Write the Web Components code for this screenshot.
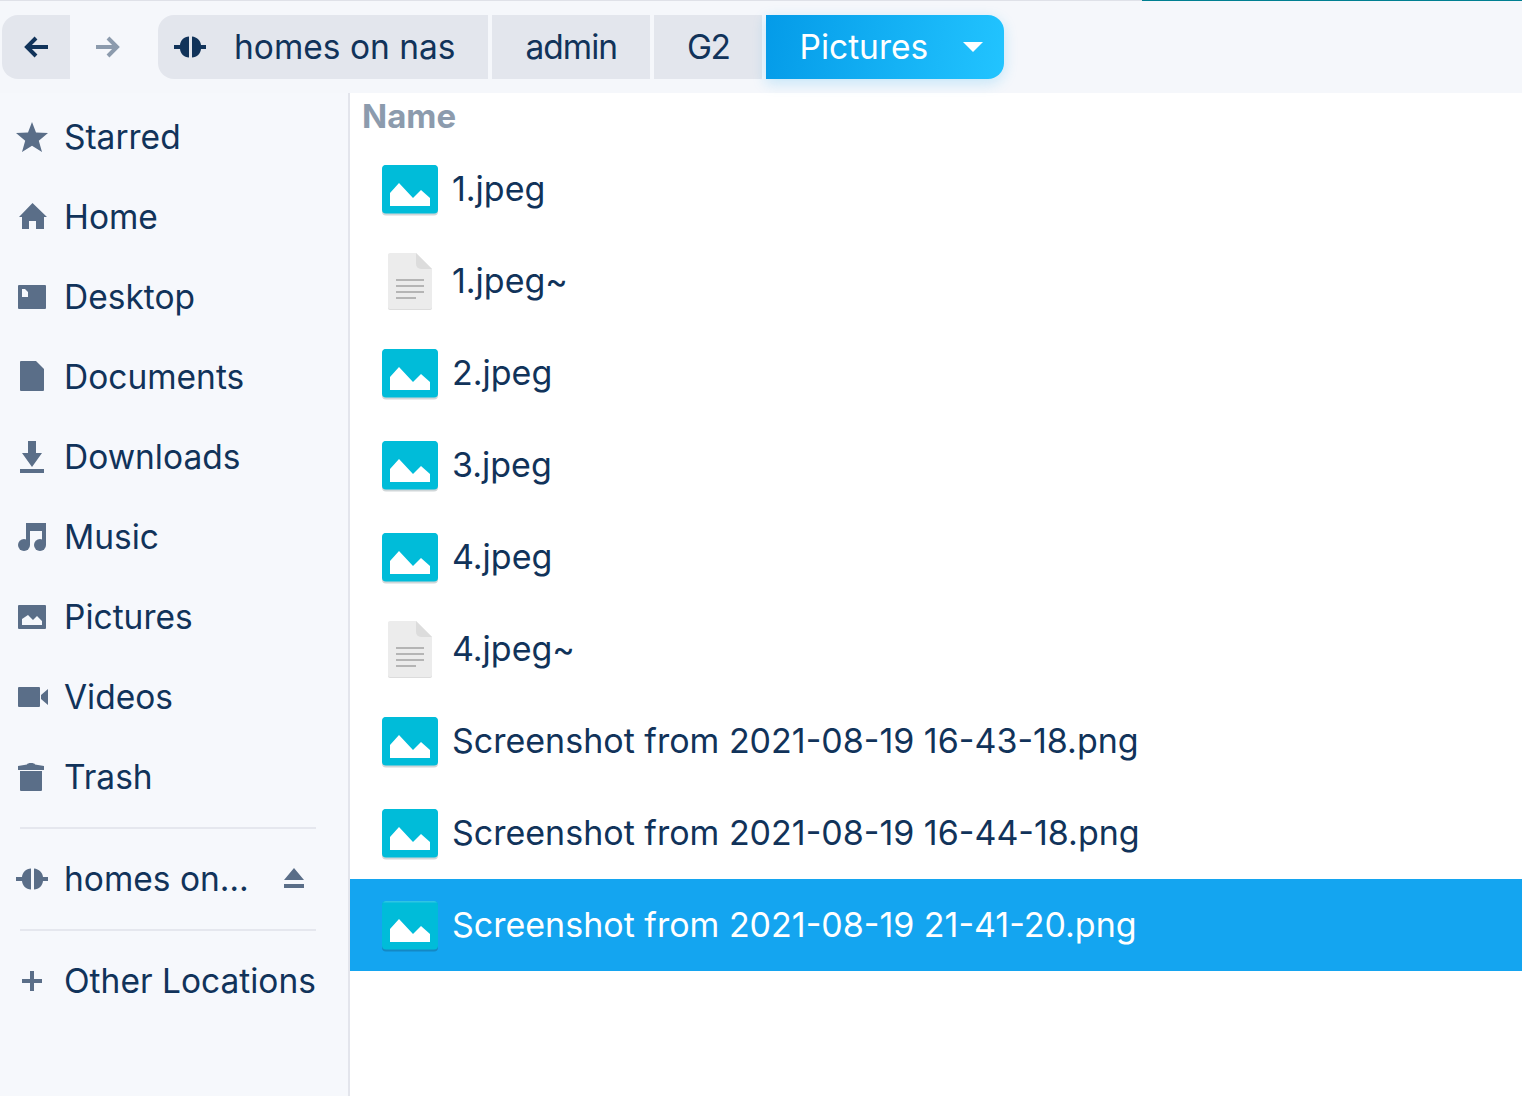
<!DOCTYPE html>
<html>
<head>
<meta charset="utf-8">
<title>Files</title>
<style>
    html, body { margin: 0; height: 100%; overflow: hidden; background: #fff; }
    body {
        font-family: "Inter", "Liberation Sans", sans-serif;
        font-size: 33.500px;
        font-weight: 380;
        color: #11335a;
    }
</style>
</head>
<body>
<fm-window>
    <fm-toolbar slot="toolbar">
        <fm-nav icon="back" class="active"></fm-nav>
        <fm-nav icon="forward"></fm-nav>
        <fm-crumb icon="network" first>homes on nas</fm-crumb>
        <fm-crumb style="letter-spacing: -1px">admin</fm-crumb>
        <fm-crumb style="letter-spacing: -1.500px">G2</fm-crumb>
        <fm-crumb current>Pictures</fm-crumb>
    </fm-toolbar>
    <fm-sidebar slot="sidebar">
        <fm-place icon="star">Starred</fm-place>
        <fm-place icon="home">Home</fm-place>
        <fm-place icon="desktop">Desktop</fm-place>
        <fm-place icon="document">Documents</fm-place>
        <fm-place icon="download">Downloads</fm-place>
        <fm-place icon="music">Music</fm-place>
        <fm-place icon="picture">Pictures</fm-place>
        <fm-place icon="video">Videos</fm-place>
        <fm-place icon="trash">Trash</fm-place>
        <fm-sep></fm-sep>
        <fm-place icon="network" eject>homes on…</fm-place>
        <fm-sep></fm-sep>
        <fm-place icon="plus">Other Locations</fm-place>
    </fm-sidebar>
    <fm-list slot="list">
        <fm-row type="image">1.jpeg</fm-row>
        <fm-row type="text">1.jpeg~</fm-row>
        <fm-row type="image">2.jpeg</fm-row>
        <fm-row type="image">3.jpeg</fm-row>
        <fm-row type="image">4.jpeg</fm-row>
        <fm-row type="text">4.jpeg~</fm-row>
        <fm-row type="image">Screenshot from 2021-08-19 16-43-18.png</fm-row>
        <fm-row type="image">Screenshot from 2021-08-19 16-44-18.png</fm-row>
        <fm-row type="image" selected>Screenshot from 2021-08-19 21-41-20.png</fm-row>
    </fm-list>
</fm-window>

<script>
// symbolic icons, 32x32 box, filled with currentColor
const ICONS = {
    back: '<path d="M24 12H3M12 3l-9 9 9 9" fill="none" stroke="currentColor" stroke-width="4"/>',
    forward: '<path d="M0 12h21M12 3l9 9-9 9" fill="none" stroke="currentColor" stroke-width="4"/>',
    star: '<path d="M16 1l4 10.500L32 12l-9.200 7.800L26 31l-10-6.300L6 31l3.200-11.200L0 12l12-.5z"/>',
    home: '<path d="M16.500 2L31 16h-3v12h-8v-8h-7v8H6V16H3z"/>',
    desktop: '<path fill-rule="evenodd" d="M3 4h26a1 1 0 0 1 1 1v22a1 1 0 0 1-1 1H3a1 1 0 0 1-1-1V5a1 1 0 0 1 1-1zm3 4v8h6v-5l-3-3z"/>',
    document: '<path d="M5 0h15l8 8v21a1 1 0 0 1-1 1H5a1 1 0 0 1-1-1V1a1 1 0 0 1 1-1z"/>',
    download: '<path d="M12 0h8v12h6l-10 14L6 12h6zM4 28h24v4H4z"/>',
    music: '<path d="M10 2h20v22h-4V10H14v14h-4V10z"/><circle cx="8" cy="24" r="6"/><circle cx="24" cy="24" r="6"/>',
    picture: '<path fill-rule="evenodd" d="M3 4h26a1 1 0 0 1 1 1v22a1 1 0 0 1-1 1H3a1 1 0 0 1-1-1V5a1 1 0 0 1 1-1zm3 14v6h20v-4l-5-5-4 4-5-5z"/>',
    video: '<path d="M3 6h20a1 1 0 0 1 1 1v18a1 1 0 0 1-1 1H3a1 1 0 0 1-1-1V7a1 1 0 0 1 1-1zM32 8v16l-7-6v-4z"/>',
    trash: '<path d="M11 3.500c0-1 2-1.500 4-1.500s4 .5 4 1.500L28 5v4H2V5zM4 10h22v19a1 1 0 0 1-1 1H5a1 1 0 0 1-1-1z"/>',
    network: '<path d="M15 5.500V26.500C10 26 6.500 23 6 18H0v-4h6c.5-5 4-8 9-8.500zM18 5.500c5 .5 8.500 4 9 8.500h5v4h-5c-.5 5-4 8-9 8.500z"/>',
    plus: '<path d="M14 6h4v8h8v4h-8v8h-4v-8H6v-4h8z"/>',
    eject: '<path d="M16 5l10 12H6zM6 21h20v4H6z"/>'
};

function svg(name, size = 32) {
    return `<svg width="${size}" height="${size}" viewBox="0 0 32 32" fill="currentColor">${ICONS[name]}</svg>`;
}

class FmWindow extends HTMLElement {
    constructor() {
        super();
        this.attachShadow({ mode: 'open' });
        this.shadowRoot.innerHTML = `
            <style>
                :host {
                    display: grid;
                    grid-template-columns: 350px 1fr;
                    grid-template-rows: 93px 1fr;
                    height: 1096px;
                }
                .top { grid-column: 1 / 3; }
            </style>
            <div class="top"><slot name="toolbar"></slot></div>
            <slot name="sidebar"></slot>
            <slot name="list"></slot>
        `;
    }
}

class FmToolbar extends HTMLElement {
    constructor() {
        super();
        this.attachShadow({ mode: 'open' });
        this.shadowRoot.innerHTML = `
            <style>
                :host {
                    display: flex;
                    position: relative;
                    box-sizing: border-box;
                    height: 93px;
                    padding: 15px 2px 14px;
                    background: #f5f7fb;
                    border-top: 1px solid #dfe1e8;
                }
                .progress {
                    position: absolute;
                    top: -1px;
                    left: 1142px;
                    right: 0;
                    height: 1px;
                    background: #007f91;
                }
            </style>
            <div class="progress"></div>
            <slot></slot>
        `;
    }
}

class FmNav extends HTMLElement {
    constructor() {
        super();
        this.attachShadow({ mode: 'open' });
        const name = this.getAttribute('icon');
        this.shadowRoot.innerHTML = `
            <style>
                :host {
                    display: flex;
                    align-items: center;
                    justify-content: center;
                    height: 64px;
                    margin-top: -1px;
                    width: 76px;
                    margin-right: 12px;
                    color: #8c9bad;
                }
                :host(.active) {
                    width: 68px;
                    margin-right: 0;
                    color: #11335a;
                    background: #e3e6ed;
                    border-radius: 16px 0 0 16px;
                }
                svg { display: block; }
            </style>
            <svg width="24" height="24" viewBox="0 0 24 24" fill="none">${ICONS[name]}</svg>
        `;
    }
}

class FmCrumb extends HTMLElement {
    constructor() {
        super();
        this.attachShadow({ mode: 'open' });
        const icon = this.getAttribute('icon');
        this.shadowRoot.innerHTML = `
            <style>
                :host {
                    display: flex;
                    align-items: center;
                    box-sizing: border-box;
                    height: 64px;
                    margin-top: -1px;
                    margin-right: 4px;
                    padding: 0 33px;
                    background: #e3e6ed;
                    color: #11335a;
                    white-space: nowrap;
                }
                :host([first]) {
                    padding-left: 16px;
                    border-radius: 16px 0 0 16px;
                }
                :host([current]) {
                    margin-right: 0;
                    padding-right: 21px;
                    color: #fff;
                    background: linear-gradient(100deg, #049be8, #22c4ff);
                    border-radius: 0 16px 16px 0;
                    box-shadow: 0 4px 14px rgba(20, 170, 240, 0.22);
                }
                svg { display: block; margin-right: 28px; }
                .arrow {
                    margin-left: 35px;
                    width: 0;
                    height: 0;
                    border: 10px solid transparent;
                    border-top: 10px solid #fff;
                    border-bottom: 0;
                }
            </style>
            ${icon ? svg(icon) : ''}
            <span class="label"><slot></slot></span>
            ${this.hasAttribute('current') ? '<div class="arrow"></div>' : ''}
        `;
    }
}

class FmSidebar extends HTMLElement {
    constructor() {
        super();
        this.attachShadow({ mode: 'open' });
        this.shadowRoot.innerHTML = `
            <style>
                :host {
                    display: block;
                    box-sizing: border-box;
                    padding-top: 4px;
                    background: #f6f8fc;
                    border-right: 2px solid #e3e5ec;
                }
            </style>
            <slot></slot>
        `;
    }
}

class FmPlace extends HTMLElement {
    constructor() {
        super();
        this.attachShadow({ mode: 'open' });
        this.shadowRoot.innerHTML = `
            <style>
                :host {
                    display: flex;
                    align-items: center;
                    height: 80px;
                    padding-left: 16px;
                    color: #11335a;
                    white-space: nowrap;
                }
                svg { display: block; }
                .icon { margin-right: 16px; color: #5a6e88; }
                .eject { margin-left: auto; margin-right: 38px; color: #5a6e88; }
            </style>
            <span class="icon">${svg(this.getAttribute('icon'))}</span>
            <span class="label"><slot></slot></span>
            ${this.hasAttribute('eject') ? `<span class="eject">${svg('eject')}</span>` : ''}
        `;
    }
}

class FmSep extends HTMLElement {
    constructor() {
        super();
        this.attachShadow({ mode: 'open' });
        this.shadowRoot.innerHTML = `
            <style>
                :host {
                    display: block;
                    height: 2px;
                    margin: 10px 32px 10px 20px;
                    background: #e5e7ee;
                }
            </style>
        `;
    }
}

class FmList extends HTMLElement {
    constructor() {
        super();
        this.attachShadow({ mode: 'open' });
        this.shadowRoot.innerHTML = `
            <style>
                :host { display: block; background: #fff; }
                .head {
                    display: flex;
                    align-items: center;
                    height: 50px;
                    padding: 0 12px 4px;
                    box-sizing: border-box;
                    font-size: 33px;
                    font-weight: 700;
                    color: #8c9bad;
                }
            </style>
            <div class="head">Name</div>
            <slot></slot>
        `;
    }
}

class FmRow extends HTMLElement {
    constructor() {
        super();
        this.attachShadow({ mode: 'open' });
        const image = `
            <svg width="64" height="64" viewBox="0 0 64 64">
                <rect x="4" y="9" width="56" height="49.500" rx="4" fill="var(--edge)"/>
                <rect x="4" y="8" width="56" height="48.500" rx="4" fill="#00bcd9"/>
                <path d="M8 8h48a4 4 0 0 1 3 1.500H5a4 4 0 0 1 3-1.500z" fill="var(--shine)"/>
                <path d="M12 36l9-10 14 15 8-8 9 8v8H12z" fill="#fff"/>
            </svg>`;
        const text = `
            <svg width="64" height="64" viewBox="0 0 64 64">
                <path d="M12 5h26l16 16v38a2 2 0 0 1-2 2H12a2 2 0 0 1-2-2V7a2 2 0 0 1 2-2z" fill="#dcdcdc"/>
                <path d="M12 4h26l16 16v38a2 2 0 0 1-2 2H12a2 2 0 0 1-2-2V6a2 2 0 0 1 2-2z" fill="#ececec"/>
                <path d="M38 4v11a5 5 0 0 0 5 5h11z" fill="#dcdcdc"/>
                <path d="M18 30h28v2H18zM18 36h28v2H18zM18 42h28v2H18zM18 48h20v2H18z" fill="#b5b5b5"/>
            </svg>`;
        this.shadowRoot.innerHTML = `
            <style>
                :host {
                    --edge: #d0d6d8;
                    --shine: #00bcd9;
                    display: flex;
                    align-items: center;
                    height: 92px;
                    padding-left: 28px;
                    font-size: 34px;
                    color: #11335a;
                    white-space: nowrap;
                }
                :host([selected]) {
                    --edge: #1488c4;
                    --shine: #2fc4e4;
                    background: #14a5f0;
                    color: #fff;
                }
                svg { display: block; margin-right: 10px; }
                .label { padding-bottom: 2px; }
            </style>
            ${this.getAttribute('type') === 'image' ? image : text}
            <span class="label"><slot></slot></span>
        `;
    }
}

customElements.define('fm-window', FmWindow);
customElements.define('fm-toolbar', FmToolbar);
customElements.define('fm-nav', FmNav);
customElements.define('fm-crumb', FmCrumb);
customElements.define('fm-sidebar', FmSidebar);
customElements.define('fm-place', FmPlace);
customElements.define('fm-sep', FmSep);
customElements.define('fm-list', FmList);
customElements.define('fm-row', FmRow);
</script>
</body>
</html>
